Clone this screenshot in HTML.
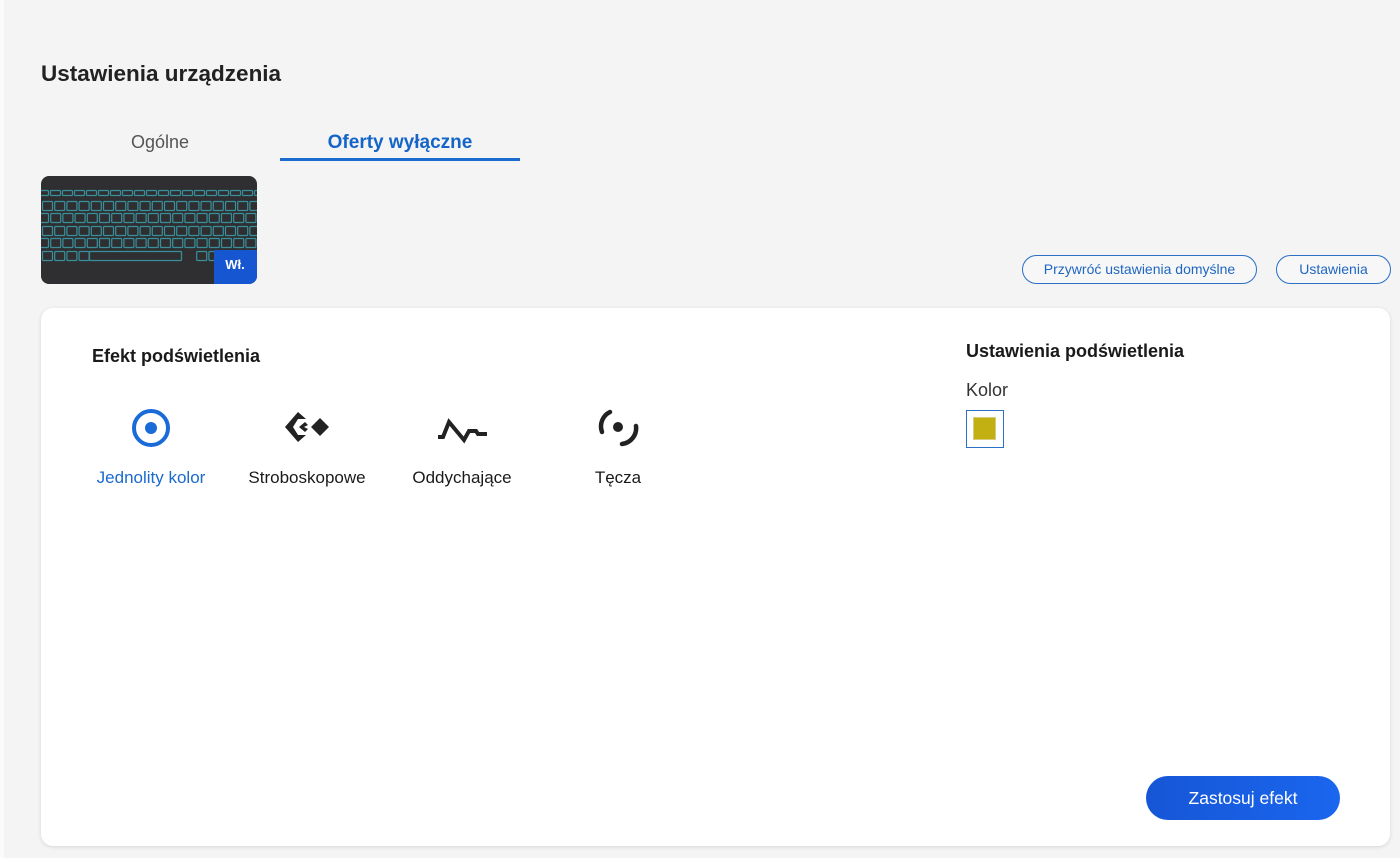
<!DOCTYPE html>
<html><head><meta charset="utf-8"><style>
*{margin:0;padding:0;box-sizing:border-box}
body{width:1400px;height:858px;background:#f4f4f4;font-family:"Liberation Sans",sans-serif;position:relative;overflow:hidden;color:#1a1a1a}
.edge{position:absolute;left:0;top:0;width:4px;height:858px;background:#fbfbfb}
.abs{position:absolute}
h1{position:absolute;left:41px;top:61px;font-size:22.5px;font-weight:bold;color:#222}
.tab{position:absolute;top:132px;font-size:18px;text-align:center}
.btn{position:absolute;top:255px;height:29px;border:1.5px solid #2b6fc7;border-radius:15px;color:#1f66c2;font-size:14px;text-align:center;line-height:26px;background:#f7f7f7}
.card{position:absolute;left:41px;top:308px;width:1349px;height:538px;background:#fff;border-radius:12px;box-shadow:0 1px 4px rgba(0,0,0,.12)}
.lbl{position:absolute;top:468px;font-size:17px;text-align:center;width:150px}
.ic{position:absolute;top:405px}
</style></head><body>
<div class="edge"></div>
<h1>Ustawienia urządzenia</h1>
<div class="tab" style="left:100px;width:120px;color:#555">Ogólne</div>
<div class="tab" style="left:280px;width:240px;color:#1565c8;font-weight:bold;font-size:19px">Oferty wyłączne</div>
<div class="abs" style="left:280px;top:158px;width:240px;height:3px;background:#1a6ad0"></div>

<svg class="abs" style="left:41px;top:176px" width="216" height="108" viewBox="0 0 216 108">
<defs><clipPath id="c"><rect width="216" height="108" rx="8"/></clipPath></defs>
<g clip-path="url(#c)">
<rect width="216" height="108" fill="#2f2f31"/>
<g fill="none" stroke="#3a8f9c" stroke-width="1.2" id="keys"></g>
<rect x="173" y="74" width="43" height="34" fill="#1656d0"/>
<text x="194" y="93" font-family="Liberation Sans,sans-serif" font-size="13" font-weight="bold" fill="#fff" text-anchor="middle">Wł.</text>
</g>
</svg>
<script>
(function(){var g=document.getElementById('keys'),s='';
var rows=[[14,7,10,12],[25,11,10,12.2],[37,11,10,12.2],[50,11,10,12.2],[62,11,10,12.2],[75,11,10,12.2]];
rows.forEach(function(r,i){var y=r[0],h=r[1]-2,w=r[2],p=r[3];
for(var x=-3+(i%2)*4;x<216;x+=p){
if(i==5&&x>45&&x<145){s+='<rect x="48.5" y="'+(y+.5)+'" width="92" height="'+h+'" rx="1"/>';x=143;continue;}
s+='<rect x="'+(x+.5)+'" y="'+(y+.5)+'" width="'+w+'" height="'+h+'" rx="1"/>';}});
g.innerHTML=s;})();
</script>

<div class="btn" style="left:1022px;width:235px">Przywróć ustawienia domyślne</div>
<div class="btn" style="left:1276px;width:115px">Ustawienia</div>

<div class="card"></div>
<div class="abs" style="left:92px;top:346px;font-size:18px;font-weight:bold;color:#1a1a1a">Efekt podświetlenia</div>

<svg class="ic" style="left:130px" width="42" height="42" viewBox="0 0 42 42"><circle cx="21" cy="23" r="17" fill="none" stroke="#1a6ad8" stroke-width="4"/><circle cx="21" cy="23" r="6" fill="#1a6ad8"/></svg>
<svg class="ic" style="left:282px" width="50" height="42" viewBox="0 0 50 42"><path d="M16 7 L3 22 L16 37 L24 30 L16 30 L11 22 L16 14 L24 14 Z" fill="#222"/><path d="M17 22 L23 17 L26 20 L22 22 L26 24 L23 27 Z" fill="#222"/><path d="M38 13 L47 22 L38 31 L29 22 Z" fill="#222"/></svg>
<svg class="ic" style="left:436px" width="52" height="42" viewBox="0 0 52 42"><path d="M2 32 H7 L13 17 L28 35 L33 26 H40 L42 29 H51" fill="none" stroke="#222" stroke-width="4" stroke-linejoin="miter"/></svg>
<svg class="ic" style="left:595px" width="46" height="46" viewBox="0 0 46 46"><path d="M15 7 A16 16 0 0 0 7 27" fill="none" stroke="#222" stroke-width="4.5" stroke-linecap="round"/><path d="M41 21 A16 16 0 0 1 27 39" fill="none" stroke="#222" stroke-width="4.5" stroke-linecap="round"/><circle cx="23" cy="22" r="5" fill="#222"/></svg>

<div class="lbl" style="left:76px;color:#1a6ad0">Jednolity kolor</div>
<div class="lbl" style="left:232px">Stroboskopowe</div>
<div class="lbl" style="left:387px">Oddychające</div>
<div class="lbl" style="left:543px">Tęcza</div>

<div class="abs" style="left:966px;top:341px;font-size:18px;font-weight:bold">Ustawienia podświetlenia</div>
<div class="abs" style="left:966px;top:380px;font-size:18px;color:#333">Kolor</div>
<div class="abs" style="left:966px;top:410px;width:38px;height:38px;border:1.5px solid #2b6fc7;background:#fff"><div style="margin:6px;width:23px;height:23px;background:#c2b012;border:1px solid #d6cc80"></div></div>

<div class="abs" style="left:1146px;top:776px;width:194px;height:44px;border-radius:22px;background:linear-gradient(90deg,#1656d6,#1a66ee);color:#fff;font-size:17.5px;text-align:center;line-height:44px">Zastosuj efekt</div>
</body></html>
